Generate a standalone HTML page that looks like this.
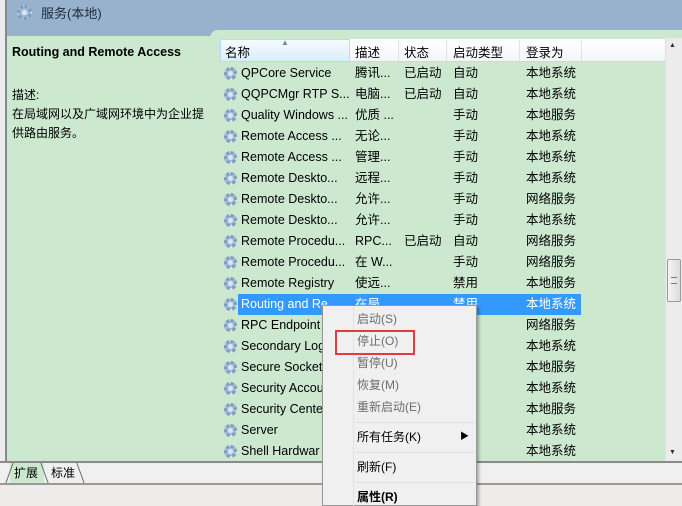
<!DOCTYPE html>
<html><head><meta charset="utf-8"><style>
*{margin:0;padding:0;box-sizing:border-box}
body{width:682px;height:506px;overflow:hidden;background:#f0f0f0;font-family:"Liberation Sans","Noto Sans CJK SC",sans-serif;font-size:12px;color:#000;position:relative}
.abs{position:absolute}
.gear{position:absolute;width:13px;height:13px;border-radius:50%;border:3px dotted #7a9cc0;background:radial-gradient(circle,#dfe8f2 2px,#9fb8d4 3px)}
.row{position:absolute;left:220px;height:21px;width:445px;line-height:21px;font-size:12.5px;white-space:nowrap}
.row span{position:absolute;top:0}
.m{position:absolute;left:34px;font-size:12px;color:#6d6d6d}
</style></head><body>
<div class="abs" style="left:0;top:0;width:682px;height:38px;background:#98b1cd"></div>
<div class="abs" style="left:0;top:0;width:6px;height:462px;background:#ececec"></div>
<div class="abs" style="left:5px;top:0;width:2px;height:462px;background:#8a8a8a"></div>
<div class="gear" style="left:17px;top:5px;width:15px;height:15px"></div>
<div class="abs" style="left:41px;top:3px;font-size:13px;color:#1e2b3c">服务(本地)</div>
<div class="abs" style="left:7px;top:36px;width:675px;height:426px;background:#cce8cf"></div>
<div class="abs" style="left:210px;top:30px;width:472px;height:12px;background:#cce8cf;border-radius:8px 0 0 0"></div>
<div class="abs" style="left:12px;top:45px;font-weight:bold;font-size:12.5px">Routing and Remote Access</div>
<div class="abs" style="left:12px;top:86px;line-height:19px;width:215px">描述:<br>在局域网以及广域网环境中为企业提<br>供路由服务。</div>
<div class="abs" style="left:220px;top:39px;width:445px;height:23px;background:linear-gradient(#fff,#f2f6fa);border-bottom:1px solid #d5d5d5"></div>
<div class="abs" style="left:220px;top:39px;width:130px;height:23px;background:linear-gradient(#f6fbfe,#d9eefa);border:1px solid #b6dcf2"></div>
<div class="abs" style="left:281px;top:38px;font-size:8px;color:#6d86a5">▲</div>
<div class="abs" style="left:225px;top:42px;font-size:12.5px">名称</div>
<div class="abs" style="left:355px;top:42px;font-size:12.5px">描述</div>
<div class="abs" style="left:404px;top:42px;font-size:12.5px">状态</div>
<div class="abs" style="left:453px;top:42px;font-size:12.5px">启动类型</div>
<div class="abs" style="left:526px;top:42px;font-size:12.5px">登录为</div>
<div class="abs" style="left:398px;top:40px;width:1px;height:21px;background:#e2e2e2"></div>
<div class="abs" style="left:446px;top:40px;width:1px;height:21px;background:#e2e2e2"></div>
<div class="abs" style="left:519px;top:40px;width:1px;height:21px;background:#e2e2e2"></div>
<div class="abs" style="left:581px;top:40px;width:1px;height:21px;background:#e2e2e2"></div>
<div class="abs" style="left:238px;top:294px;width:343px;height:21px;background:#3399ff"></div>
<div id="rows"></div>
<div class="abs" style="left:665px;top:38px;width:17px;height:424px;background:#ececec;border-left:1px solid #e0e0e0"></div>
<div class="abs" style="left:669px;top:42px;font-size:7px;color:#333">▲</div>
<div class="abs" style="left:669px;top:449px;font-size:7px;color:#333">▼</div>
<div class="abs" style="left:667px;top:259px;width:14px;height:43px;background:linear-gradient(90deg,#f4f4f4,#dcdcdc);border:1px solid #9a9a9a;border-radius:2px"></div>
<div class="abs" style="left:671px;top:277px;width:6px;height:7px;border-top:1px solid #777;border-bottom:1px solid #777"></div>
<div class="abs" style="left:0;top:461px;width:682px;height:2px;background:#8a8a8a"></div>
<div class="abs" style="left:0;top:483px;width:682px;height:2px;background:#999"></div>
<div class="abs" style="left:0;top:485px;width:682px;height:21px;background:#eeeceb"></div>
<div class="abs" style="left:10px;top:463px;width:34px;height:20px;background:#cce8cf"></div>
<div class="abs" style="left:14px;top:464px;font-size:12px">扩展</div>
<div class="abs" style="left:51px;top:464px;font-size:12px">标准</div>
<div class="abs" style="left:9px;top:463px;width:1px;height:20px;background:#666;transform:skewX(-20deg)"></div>
<div class="abs" style="left:44px;top:463px;width:1px;height:20px;background:#666;transform:skewX(20deg)"></div>
<div class="abs" style="left:80px;top:463px;width:1px;height:20px;background:#666;transform:skewX(20deg)"></div>
<div class="abs" style="left:322px;top:305px;width:155px;height:201px;background:#f0f0f0;border:1px solid #979797;box-shadow:2px 2px 3px rgba(0,0,0,.3)">
<div class="abs" style="left:30px;top:0;width:1px;height:200px;background:#e2e2e2"></div>
<div class="m" style="top:4px">启动(S)</div>
<div class="m" style="top:26px">停止(O)</div>
<div class="m" style="top:48px">暂停(U)</div>
<div class="m" style="top:70px">恢复(M)</div>
<div class="m" style="top:92px">重新启动(E)</div>
<div class="abs" style="left:32px;top:116px;width:120px;height:1px;background:#e0e0e0"></div>
<div class="m" style="top:122px;color:#000">所有任务(K)</div>
<div class="abs" style="left:137px;top:123px;font-size:9px">▶</div>
<div class="abs" style="left:32px;top:146px;width:120px;height:1px;background:#e0e0e0"></div>
<div class="m" style="top:152px;color:#000">刷新(F)</div>
<div class="abs" style="left:32px;top:176px;width:120px;height:1px;background:#e0e0e0"></div>
<div class="m" style="top:182px;color:#000;font-weight:bold">属性(R)</div>
</div>
<div class="abs" style="left:335px;top:330px;width:80px;height:25px;border:2px solid #e8383a"></div>
<script>
var d=[["QPCore Service","腾讯...","已启动","自动","本地系统"],["QQPCMgr RTP S...","电脑...","已启动","自动","本地系统"],["Quality Windows ...","优质 ...","","手动","本地服务"],["Remote Access ...","无论...","","手动","本地系统"],["Remote Access ...","管理...","","手动","本地系统"],["Remote Deskto...","远程...","","手动","本地系统"],["Remote Deskto...","允许...","","手动","网络服务"],["Remote Deskto...","允许...","","手动","本地系统"],["Remote Procedu...","RPC...","已启动","自动","网络服务"],["Remote Procedu...","在 W...","","手动","网络服务"],["Remote Registry","使远...","","禁用","本地服务"],["Routing and Re...","在局...","","禁用","本地系统"],["RPC Endpoint","","","","网络服务"],["Secondary Log","","","","本地系统"],["Secure Socket","","","","本地服务"],["Security Accou","","","","本地系统"],["Security Cente","","","","本地服务"],["Server","","","","本地系统"],["Shell Hardwar","","","","本地系统"]];
var h="";d.forEach(function(r,i){var t=63+21*i,c=i==11?"#fff":"#000";h+='<div class="gear" style="left:224px;top:'+(t+4)+'px"></div><div class="row" style="top:'+t+'px;color:'+c+'"><span style="left:21px">'+r[0]+'</span><span style="left:135px">'+r[1]+'</span><span style="left:184px">'+r[2]+'</span><span style="left:233px">'+r[3]+'</span><span style="left:306px">'+r[4]+'</span></div>';});
document.getElementById("rows").innerHTML=h;
</script>
</body></html>
